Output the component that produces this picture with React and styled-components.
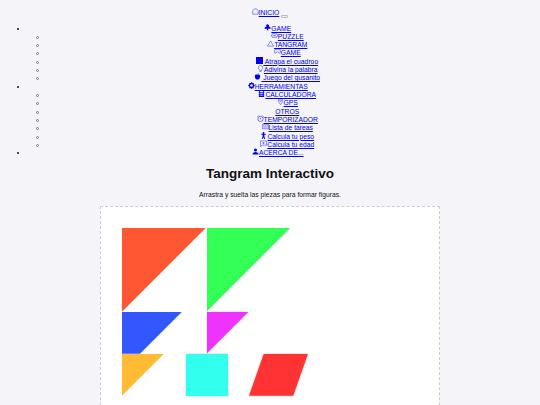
import React from 'react'
import styled, { createGlobalStyle } from 'styled-components'

const GlobalStyle = createGlobalStyle`
	html, body {
		margin: 0;
		padding: 0;
		background-color: #f4f4f9;
		font-family: 'Liberation Sans', Arial, sans-serif;
		color: #111;
	}
`

const Glyph = ({ children, fill = 'none' }) => (
	<Icon viewBox="0 0 16 16" fill={fill} stroke={fill === 'none' ? '#0000ee' : 'none'}>
		{children}
	</Icon>
)

const icons = {
	home: <path d="M1.5 14V6.5L5.5 2h5l4 4.5V14z" strokeWidth="1" />,
	game: <path d="M9 1a2.5 2.5 0 0 1 2 4l4 3v3H9l1 3H6l1-3H1c0-3 2-5 5-6a2.5 2.5 0 0 1 3-4z" />,
	puzzle: <path d="M3 4h10l2 4-2 4H3L1 8z M5 8h6" strokeWidth="1.2" />,
	tangram: <path d="M8 2l7 12H1z" strokeWidth="1" />,
	controller: <path d="M2 3h12l1 8-3 1-2-3H6l-2 3-3-1z" strokeWidth="1" />,
	square: <rect x="0" y="0" width="16" height="16" />,
	bulb: <path d="M8 1a5 5 0 0 1 3 9l-1 3H6l-1-3a5 5 0 0 1 3-9z M6 15h4" strokeWidth="1" />,
	apple: <path d="M8 4c4-2 7 0 6 5-1 4-3 6-6 6s-5-2-6-6c-1-5 2-7 6-5z M8 4c0-2 1-3 3-3" />,
	gear: <path fillRule="evenodd" d="M8 0l2 2h3v3l3 3-3 3v3h-3l-2 2-2-2H3v-3L0 8l3-3V2h3z M8 5a3 3 0 1 0 0 6 3 3 0 0 0 0-6z" />,
	calc: <path fillRule="evenodd" d="M2 0h12v16H2z M4 2v3h8V2z M4 7v2h2V7z M7 7v2h2V7z M10 7v2h2V7z M4 11v2h2v-2z M7 11v2h2v-2z M10 11v2h2v-2z" />,
	pin: <path d="M8 1a5 5 0 0 1 5 5c0 3-3 6-5 9-2-3-5-6-5-9a5 5 0 0 1 5-5z M8 4a2 2 0 1 0 0 4 2 2 0 0 0 0-4z" strokeWidth="1" />,
	clock: <path d="M8 3a6 6 0 1 1 0 12A6 6 0 0 1 8 3z M8 6v4 M1 4l3-3 M15 4l-3-3" strokeWidth="1.2" />,
	list: <path d="M1 3h14v10H1z M3 6h2 M7 6h2 M11 6h2 M3 9h10" strokeWidth="1" />,
	person: <path d="M8 0a2 2 0 1 1 0 4 2 2 0 0 1 0-4z M3 4h10v2h-3v4l2 6h-2l-2-4-2 4H4l2-6V6H3z" />,
	card: <path d="M1 2h14v10H5l-4 3z M7 5l3 2-3 2z" strokeWidth="1" />,
	user: <path d="M8 1a3.5 3.5 0 1 1 0 7 3.5 3.5 0 0 1 0-7z M1 15c0-4 3-6 7-6s7 2 7 6z" />,
}

const games = [
	{ icon: 'puzzle', label: 'PUZZLE' },
	{ icon: 'tangram', label: 'TANGRAM' },
	{ icon: 'controller', label: 'GAME' },
	{ icon: 'square', label: ' Atrapa el cuadroo', solid: true },
	{ icon: 'bulb', label: 'Adivina la palabra' },
	{ icon: 'apple', label: ' Juego del gusanito', solid: true },
]

const tools = [
	{ icon: 'calc', label: 'CALCULADORA', solid: true },
	{ icon: 'pin', label: 'GPS' },
	{ label: 'OTROS' },
	{ icon: 'clock', label: 'TEMPORIZADOR' },
	{ icon: 'list', label: 'Lista de tareas' },
	{ icon: 'person', label: 'Calcula tu peso', solid: true },
	{ icon: 'card', label: 'Calcula tu edad' },
]

const NavLink = ({ icon, label, solid }) => (
	<>
		{icon && <Glyph fill={solid ? '#0000ee' : 'none'}>{icons[icon]}</Glyph>}
		<a href="#">{label}</a>
	</>
)

const pieces = [
	{ x: 21, y: 20.5, w: 84, h: 84, color: '#ff5733', shape: 'polygon(0 0, 100% 0, 0 100%)' },
	{ x: 105.5, y: 20.5, w: 84, h: 84, color: '#33ff57', shape: 'polygon(0 0, 100% 0, 0 100%)' },
	{ x: 21, y: 104.5, w: 60, h: 42, color: '#3357ff', shape: 'polygon(0 0, 100% 0, 30% 100%, 0 100%)' },
	{ x: 105.5, y: 104.5, w: 42, h: 42, color: '#ee33ff', shape: 'polygon(0 0, 100% 0, 0 100%)', lifted: true },
	{ x: 21, y: 146.5, w: 42, h: 42, color: '#ffbb33', shape: 'polygon(0 0, 100% 0, 0 100%)' },
	{ x: 84.5, y: 146.5, w: 42.5, h: 42, color: '#33ffee', lifted: true },
	{ x: 148, y: 146.5, w: 59, h: 42, color: '#ff3333', shape: 'polygon(25% 0, 100% 0, 75% 100%, 0 100%)', lifted: true },
]

const App = () => {
	return (
		<>
			<GlobalStyle />
			<Nav>
				<TopRow>
					<Glyph>{icons.home}</Glyph>
					<a href="#">INICIO</a>
					<MenuToggle />
				</TopRow>
				<MainList>
					<li>
						<Glyph fill="#0000ee">{icons.game}</Glyph>
						<a href="#">GAME</a>
						<SubList>
							{games.map((item, i) => (
								<li key={i}>
									<NavLink {...item} />
								</li>
							))}
						</SubList>
					</li>
					<li>
						<Glyph fill="#0000ee">{icons.gear}</Glyph>
						<a href="#">HERRAMIENTAS</a>
						<SubList>
							{tools.map((item, i) => (
								<li key={i}>
									<NavLink {...item} />
								</li>
							))}
						</SubList>
					</li>
					<li>
						<Glyph fill="#0000ee">{icons.user}</Glyph>
						<a href="#">ACERCA DE...</a>
					</li>
				</MainList>
			</Nav>
			<Title>Tangram Interactivo</Title>
			<Intro>Arrastra y suelta las piezas para formar figuras.</Intro>
			<Board>
				{pieces.map((p, i) => (
					<Piece
						key={i}
						$lifted={p.lifted}
						style={{ left: p.x, top: p.y, width: p.w, height: p.h }}
					>
						<Shape $color={p.color} $shape={p.shape} />
					</Piece>
				))}
			</Board>
		</>
	)
}

const Nav = styled.nav`
	padding: 8.5px 10px 0;
	font-size: 6.75px;
	line-height: 8.33px;
	text-align: center;

	a {
		color: #0000ee;
	}
`

const TopRow = styled.div`
	height: 16px;
`

const Icon = styled.svg`
	width: 7px;
	height: 7px;
	margin: -2px 0;
	vertical-align: 2px;
`

const MenuToggle = styled.button`
	display: inline-block;
	width: 7px;
	height: 3px;
	margin-left: 2px;
	padding: 0;
	vertical-align: -2px;
	background-color: #efefef;
	border: 1px solid #bbb;
	border-radius: 1px;
`

const MainList = styled.ul`
	margin: 0;
	padding: 0 2.5px 0 18px;
	list-style: disc;
`

const SubList = styled.ul`
	margin: 0;
	padding: 0 0 0 19px;
	list-style: none;

	li {
		position: relative;
	}

	/* hollow bullet, the native circle marker fills in at this size */
	li::before {
		content: '';
		position: absolute;
		left: -11.5px;
		top: 3px;
		box-sizing: border-box;
		width: 3px;
		height: 3px;
		border: 0.75px solid #777;
		border-radius: 50%;
	}
`

const Title = styled.h1`
	margin: 7.5px 0 0;
	font-size: 13.5px;
	line-height: 18px;
	font-weight: 700;
	text-align: center;
`

const Intro = styled.p`
	margin: 7px 0 0;
	font-size: 6.75px;
	line-height: 9px;
	text-align: center;
`

const Board = styled.div`
	position: relative;
	box-sizing: border-box;
	width: 340px;
	height: 300px;
	margin: 7px auto 0;
	background-color: #fff;
	border: 1px dashed #ccc;
`

const Piece = styled.div`
	position: absolute;
	filter: ${({ $lifted }) => ($lifted ? 'drop-shadow(0 0.5px 1px rgba(0, 0, 0, 0.25))' : 'none')};
`

const Shape = styled.div`
	width: 100%;
	height: 100%;
	background-color: ${({ $color }) => $color};
	clip-path: ${({ $shape }) => $shape || 'none'};
`

export default App
